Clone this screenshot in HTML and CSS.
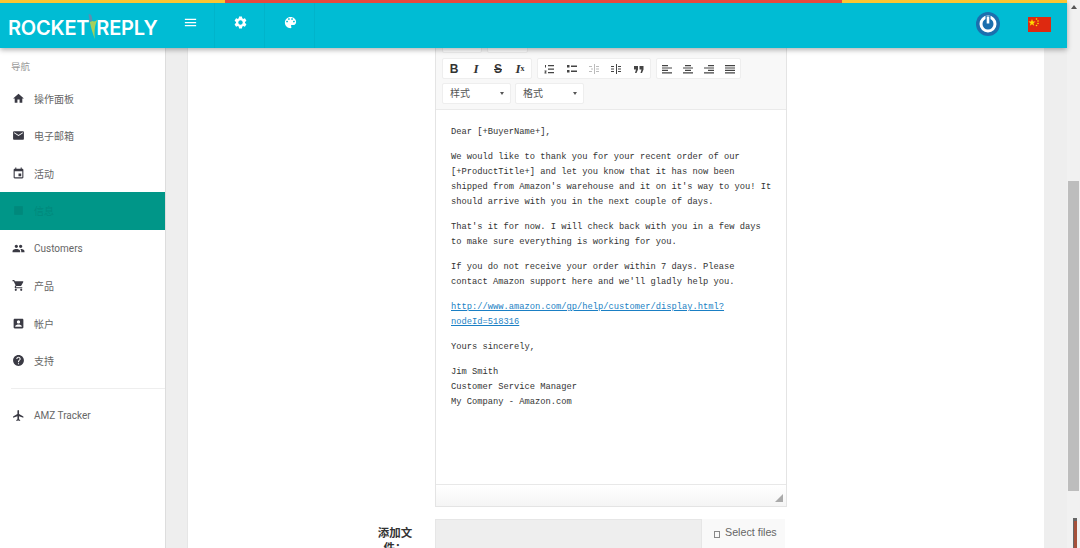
FILE: index.html
```html
<!DOCTYPE html>
<html lang="zh">
<head>
<meta charset="utf-8">
<title>RocketReply</title>
<link rel="stylesheet" href="styles.css">
</head>
<body>
<div class="page">
  <div class="viewport">
    <header class="header">
      <div class="strip"><i class="s-yellow s-a"></i><i class="s-red"></i><i class="s-yellow s-b"></i></div>
      <div class="bar">
        <div class="logo"><span>ROCKET</span><svg class="rocket" viewBox="0 0 10 25"><path d="M.5.500C1.800-.2 3 .3 3.500 1.800L4.500 7 1.800 8z" fill="#5b8fb0"/><path d="M1.800 8 4.500 7C6 8 7.500 7.500 9.500 5.500 7.500 10 6 14 6.800 25 4.500 19 3 13 1.800 8z" fill="#a7cf5a"/></svg><span>REPLY</span></div>
        <nav class="tools">
          <div class="tool"><svg class="ti" viewBox="0 0 24 24"><path d="M3 18h18v-2H3v2zm0-5h18v-2H3v2zm0-7v2h18V6H3z"/></svg></div>
          <div class="tool"><svg class="ti" viewBox="0 0 24 24"><path d="M19.140 12.940c.04-.3.06-.61.06-.94 0-.32-.02-.64-.07-.94l2.030-1.580c.18-.14.23-.41.12-.61l-1.920-3.320c-.12-.22-.37-.29-.59-.22l-2.390.96c-.5-.38-1.030-.7-1.620-.94l-.36-2.540c-.04-.24-.24-.41-.48-.41h-3.840c-.24 0-.43.17-.47.41l-.36 2.540c-.59.24-1.130.57-1.620.94l-2.390-.96c-.22-.08-.47 0-.59.22L2.740 8.870c-.12.21-.08.47.12.61l2.030 1.580c-.05.3-.09.63-.09.94s.02.64.07.94l-2.030 1.580c-.18.14-.23.41-.12.61l1.920 3.320c.12.22.37.29.59.22l2.390-.96c.5.38 1.030.7 1.620.94l.36 2.540c.05.24.24.41.48.41h3.840c.24 0 .44-.17.47-.41l.36-2.540c.59-.24 1.130-.56 1.620-.94l2.390.96c.22.08.47 0 .59-.22l1.920-3.320c.12-.22.07-.47-.12-.61l-2.010-1.580zM12 15.600c-1.980 0-3.600-1.620-3.600-3.600s1.620-3.600 3.600-3.600 3.600 1.620 3.600 3.600-1.620 3.600-3.600 3.600z"/></svg></div>
          <div class="tool"><svg class="ti" viewBox="0 0 24 24"><path d="M12 3c-4.970 0-9 4.030-9 9s4.030 9 9 9c.83 0 1.500-.67 1.500-1.500 0-.39-.15-.74-.39-1.010-.23-.26-.38-.61-.38-.99 0-.83.67-1.500 1.500-1.500H16c2.760 0 5-2.240 5-5 0-4.420-4.030-8-9-8zm-5.500 9c-.83 0-1.500-.67-1.500-1.500S5.670 9 6.500 9 8 9.670 8 10.500 7.330 12 6.500 12zm3-4C8.670 8 8 7.330 8 6.500S8.670 5 9.500 5s1.500.67 1.500 1.500S10.330 8 9.500 8zm5 0c-.83 0-1.500-.67-1.500-1.500S13.670 5 14.500 5s1.500.67 1.500 1.500S15.330 8 14.500 8zm3 4c-.83 0-1.500-.67-1.500-1.500S16.670 9 17.500 9s1.500.67 1.500 1.500-.67 1.500-1.500 1.500z"/></svg></div>
        </nav>
        <div class="right">
          <svg class="power" viewBox="0 0 24 24"><circle cx="12" cy="12" r="12" fill="#1b6fae"/><circle cx="12" cy="12" r="7" fill="none" stroke="#fff" stroke-width="3"/><path d="M12 4v8" stroke="#1b6fae" stroke-width="5"/><path d="M12 4.500v7" stroke="#fff" stroke-width="2.600"/></svg>
          <svg class="flag" viewBox="0 0 23 15"><rect width="23" height="15" fill="#de2910"/><path d="M4 2l.9 2.600 2.700 0-2.200 1.600.8 2.600L4 7.200 1.800 8.800l.8-2.600L.4 4.600l2.700 0z" fill="#ffde00"/><circle cx="8.500" cy="2" r=".8" fill="#ffde00"/><circle cx="10" cy="4" r=".8" fill="#ffde00"/><circle cx="10" cy="6.500" r=".8" fill="#ffde00"/><circle cx="8.500" cy="8.500" r=".8" fill="#ffde00"/></svg>
        </div>
      </div>
    </header>
    <div class="body">
      <aside class="sidebar">
        <div class="side-title">导航</div>
        <a class="item"><svg class="ic" viewBox="0 0 24 24"><path d="M10 20v-6h4v6h5v-8h3L12 3 2 12h3v8z"/></svg><span>操作面板</span></a>
        <a class="item"><svg class="ic" viewBox="0 0 24 24"><path d="M20 4H4c-1.100 0-1.990.9-1.990 2L2 18c0 1.100.9 2 2 2h16c1.100 0 2-.9 2-2V6c0-1.100-.9-2-2-2zm0 4l-8 5-8-5V6l8 5 8-5v2z"/></svg><span>电子邮箱</span></a>
        <a class="item"><svg class="ic" viewBox="0 0 24 24"><path d="M17 12h-5v5h5v-5zM16 1v2H8V1H6v2H5c-1.110 0-1.990.9-1.990 2L3 19c0 1.100.89 2 2 2h14c1.100 0 2-.9 2-2V5c0-1.100-.9-2-2-2h-1V1h-2zm3 18H5V8h14v11z"/></svg><span>活动</span></a>
        <a class="item active"><svg class="ic" viewBox="0 0 24 24"><path d="M20 4H4v16h16z"/></svg><span>信息</span></a>
        <a class="item"><svg class="ic" viewBox="0 0 24 24"><path d="M16 11c1.660 0 2.990-1.340 2.990-3S17.660 5 16 5c-1.660 0-3 1.340-3 3s1.340 3 3 3zm-8 0c1.660 0 2.990-1.340 2.990-3S9.660 5 8 5C6.340 5 5 6.340 5 8s1.340 3 3 3zm0 2c-2.330 0-7 1.170-7 3.500V19h14v-2.500c0-2.330-4.670-3.500-7-3.500zm8 0c-.29 0-.62.02-.97.05 1.160.84 1.970 1.970 1.970 3.450V19h6v-2.500c0-2.330-4.670-3.500-7-3.500z"/></svg><span>Customers</span></a>
        <a class="item"><svg class="ic" viewBox="0 0 24 24"><path d="M7 18c-1.100 0-1.990.9-1.990 2S5.900 22 7 22s2-.9 2-2-.9-2-2-2zM1 2v2h2l3.600 7.590-1.350 2.450c-.16.28-.25.61-.25.96 0 1.100.9 2 2 2h12v-2H7.420c-.14 0-.25-.11-.25-.25l.03-.12.9-1.630h7.450c.75 0 1.410-.41 1.750-1.030l3.580-6.490c.08-.14.12-.31.12-.48 0-.55-.45-1-1-1H5.210l-.94-2H1zm16 16c-1.100 0-1.990.9-1.990 2s.89 2 1.990 2 2-.9 2-2-.9-2-2-2z"/></svg><span>产品</span></a>
        <a class="item"><svg class="ic" viewBox="0 0 24 24"><path d="M3 5v14c0 1.100.89 2 2 2h14c1.100 0 2-.9 2-2V5c0-1.100-.9-2-2-2H5c-1.110 0-2 .9-2 2zm12 4c0 1.660-1.340 3-3 3s-3-1.340-3-3 1.340-3 3-3 3 1.340 3 3zm-9 8c0-2 4-3.100 6-3.100s6 1.100 6 3.100v1H6v-1z"/></svg><span>帐户</span></a>
        <a class="item"><svg class="ic" viewBox="0 0 24 24"><path d="M12 2C6.480 2 2 6.480 2 12s4.480 10 10 10 10-4.480 10-10S17.520 2 12 2zm1 17h-2v-2h2v2zm2.070-7.750l-.9.92C13.450 12.900 13 13.500 13 15h-2v-.5c0-1.100.45-2.100 1.170-2.830l1.240-1.260c.37-.36.59-.86.59-1.410 0-1.100-.9-2-2-2s-2 .9-2 2H8c0-2.210 1.790-4 4-4s4 1.790 4 4c0 .88-.36 1.680-.93 2.250z"/></svg><span>支持</span></a>
        <div class="side-rule"></div>
        <a class="item"><svg class="ic" viewBox="0 0 24 24"><path d="M21 16v-2l-8-5V3.500c0-.83-.67-1.500-1.500-1.500S10 2.670 10 3.500V9l-8 5v2l8-2.500V19l-2 1.500V22l3.500-1 3.500 1v-1.500L13 19v-5.500l8 2.500z"/></svg><span>AMZ Tracker</span></a>
      </aside>
      <main class="gutter">
        <section class="content">
          <div class="form-row">
            <div class="label-col"></div>
            <div class="editor">
              <div class="toolbar">
                <div class="tb-row">
                  <div class="group g-a"><svg class="bi" viewBox="0 0 10 10"><path d="M1 7h8v2H1z"/></svg><svg class="bi faint" viewBox="0 0 10 10"><path d="M1 7h8v2H1z"/></svg></div>
                  <div class="group g-b"><svg class="bi" viewBox="0 0 10 10"><path d="M1 7h3v2H1zM6 7h3v2H6z"/></svg></div>
                </div>
                <div class="tb-row">
                  <div class="group g-1">
                    <span class="btn t-b">B</span><span class="btn t-i">I</span><span class="btn t-s">S</span><span class="btn t-i">I<sub class="x">x</sub></span>
                  </div>
                  <div class="group g-2">
                    <span class="btn"><svg class="bi" viewBox="0 0 10 10"><path d="M4 1h6v1.200H4zM4 4.500h6v1.200H4zM4 8h6v1.200H4zM1 1h1v2.500H1zM.5 6.500h2v1l-1 1h1V9.500h-2v-1l1-1h-1z"/></svg></span>
                    <span class="btn"><svg class="bi" viewBox="0 0 10 10"><path d="M4 1.500h6v1.500H4zM4 6.500h6V8H4zM0 1h2.500v2.500H0zM0 6h2.500v2.500H0z"/></svg></span>
                    <span class="btn"><svg class="bi faint" viewBox="0 0 10 10"><path d="M5 0h1v10H5zM7 2h3v1H7zM7 4.500h3v1H7zM7 7h3v1H7zM0 2h3v1H0zM0 7h3v1H0zM2 4.500h2v1H2z"/></svg></span>
                    <span class="btn"><svg class="bi" viewBox="0 0 10 10"><path d="M5 0h1v10H5zM7 2h3v1H7zM7 4.500h3v1H7zM7 7h3v1H7zM0 2h3v1H0zM0 7h3v1H0zM0 4.500h3v1H0z"/></svg></span>
                    <span class="btn"><svg class="bi" viewBox="0 0 10 10"><path d="M0 2h4v3.500L2.500 9H1l1-3.500H0zM5.500 2h4v3.500L8 9H6.500l1-3.500h-2z"/></svg></span>
                  </div>
                  <div class="group g-3">
                    <span class="btn"><svg class="bi" viewBox="0 0 10 10"><path d="M0 1h6v1.200H0zM0 3.400h10v1.200H0zM0 5.800h6V7H0zM0 8.200h10v1.200H0z"/></svg></span>
                    <span class="btn"><svg class="bi" viewBox="0 0 10 10"><path d="M2 1h6v1.200H2zM0 3.400h10v1.200H0zM2 5.800h6V7H2zM0 8.200h10v1.200H0z"/></svg></span>
                    <span class="btn"><svg class="bi" viewBox="0 0 10 10"><path d="M4 1h6v1.200H4zM0 3.400h10v1.200H0zM4 5.800h6V7H4zM0 8.200h10v1.200H0z"/></svg></span>
                    <span class="btn"><svg class="bi" viewBox="0 0 10 10"><path d="M0 1h10v1.200H0zM0 3.400h10v1.200H0zM0 5.800h10V7H0zM0 8.200h10v1.200H0z"/></svg></span>
                  </div>
                </div>
                <div class="tb-row">
                  <div class="combo"><span>样式</span><i class="caret"></i></div>
                  <div class="combo"><span>格式</span><i class="caret"></i></div>
                </div>
              </div>
              <div class="editable">
                <p>Dear [+BuyerName+],</p>
                <p>We would like to thank you for your recent order of our [+ProductTitle+] and let you know that it has now been shipped from Amazon's warehouse and it on it's way to you! It should arrive with you in the next couple of days.</p>
                <p>That's it for now. I will check back with you in a few days to make sure everything is working for you.</p>
                <p>If you do not receive your order within 7 days. Please contact Amazon support here and we'll gladly help you.</p>
                <p><a class="link">http://www.amazon.com/gp/help/customer/display.html?nodeId=518316</a></p>
                <p>Yours sincerely,</p>
                <p>Jim Smith<br>Customer Service Manager<br>My Company - Amazon.com</p>
              </div>
              <div class="editor-foot"><svg class="grip" viewBox="0 0 8 8"><path d="M8 0v8H0z"/></svg></div>
            </div>
          </div>
          <div class="form-row file-row">
            <div class="label-col"><label class="file-label">添加文件：</label></div>
            <div class="file-input"></div>
            <div class="file-btn"><i class="box"></i>Select files</div>
          </div>
        </section>
      </main>
    </div>
  </div>
  <div class="scrollbar">
    <i class="arrow"></i>
    <div class="thumb"></div>
    <div class="mark"></div>
  </div>
</div>
</body>
</html>
```
FILE: styles.css
```css
* { box-sizing: border-box; }
html, body { margin: 0; height: 100%; overflow: hidden; }
body { font-family: Roboto, "Noto Sans CJK SC", sans-serif; background: #fff; }
.page { display: flex; width: 1080px; height: 548px; }
.viewport { width: 1067px; display: flex; flex-direction: column; }

.header { height: 48px; position: relative; z-index: 2; background: #00bcd4; box-shadow: 0 2px 5px rgba(0,0,0,.3); flex: none; }
.strip { display: flex; height: 3px; }
.strip i { display: block; }
.s-yellow { background: #fbc532; }
.s-a { width: 225px; }
.s-red { width: 617px; background: #e5493f; }
.s-b { flex: 1; }
.bar { display: flex; height: 45px; align-items: flex-start; }
.logo { width: 165px; height: 45px; padding: 0 0 0 8px; display: flex; align-items: center; color: #fff; font: 600 20px/1 Inter, sans-serif; letter-spacing: -.2px; }
.logo span { margin-top: 4px; }
.rocket { width: 10px; height: 25px; flex: none; margin: 1px -2px 0 -1px; }
.tools { display: flex; }
.tool { width: 50px; height: 45px; padding: 12px 0 0 18px; border-right: 1px solid rgba(0,0,0,.04); }
.ti { display: block; width: 15px; height: 15px; fill: #fff; }
.right { margin-left: auto; display: flex; align-items: center; height: 42px; padding-right: 16px; gap: 28px; }
.power { width: 24px; height: 24px; display: block; }
.flag { width: 23px; height: 15px; display: block; }

.body { flex: 1; display: flex; overflow: hidden; }
.sidebar { width: 166px; flex: none; background: #fff; border-right: 1px solid #ddd; padding-top: 11px; }
.side-title { height: 20.500px; padding: 1px 0 0 11px; font-size: 9.500px; line-height: 14px; color: #999; }
.item { display: flex; align-items: center; height: 37.500px; padding-left: 12px; color: #666; font-size: 10px; }
.item span { margin-left: 9px; }
.ic { width: 13px; height: 13px; flex: none; fill: #3a3a44; }
.active { background: #009688; color: #00897c; }
.active .ic { fill: #00897c; }
.side-rule { height: 1px; background: #eee; margin: 8px 0 8.500px 11px; }

.gutter { flex: 1; background: #eee; padding: 0 23px 0 21px; min-width: 0; }
.content { background: #fff; height: 100%; border-left: 1px solid #e6e6e6; }
.form-row { display: flex; }
.label-col { width: 247px; flex: none; display: flex; justify-content: flex-end; }
.editor { width: 352px; margin-top: -16px; border: 1px solid #e4e4e4; border-top: 0; background: #fff; }
.toolbar { background: #f8f8f8; border-bottom: 1px solid #eaeaea; padding: 0 6px 5px; height: 78px; }
.tb-row { display: flex; gap: 5px; margin-bottom: 4px; height: 21px; }
.group { display: flex; background: #fff; border: 1px solid #eee; border-radius: 2px; align-items: center; }
.g-a { width: 40px; justify-content: space-around; }
.g-b { width: 41px; justify-content: center; }
.tb-row:first-child { margin-bottom: 5px; }
.tb-row:first-child .group { padding-left: 8px; }
.g-1 { width: 90px; }
.g-1 .btn { width: 22px; }
.g-2 { width: 114px; }
.g-2 .btn { width: 22.500px; }
.g-3 { width: 85px; }
.g-3 .btn { width: 21px; }
.btn { display: flex; align-items: center; justify-content: center; height: 19px; color: #333; font: 11px/1 "Liberation Serif", serif; }
.bi { display: block; width: 10px; height: 10px; fill: #444; }
.faint { fill: #bbb; }
.t-b { font: 700 12px/1 "Liberation Sans", sans-serif; }
.t-i { font: italic 700 13px/1 "Liberation Serif", serif; }
.t-s { font: 700 12px/1 "Liberation Sans", sans-serif; text-decoration: line-through; }
.x { font-size: 8px; line-height: 0; font-style: normal; }
.combo { width: 69px; height: 20.500px; display: flex; align-items: center; justify-content: space-between; background: #fff; border: 1px solid #eee; border-radius: 2px; padding: 0 6px 0 7px; font: 10px/1 "Noto Sans CJK SC", sans-serif; color: #555; }
.combo + .combo { margin-left: -1px; }
.caret { width: 0; height: 0; border: 2.500px solid transparent; border-top: 3px solid #555; border-bottom: 0; }

.editable { height: 374px; padding: 15px 12px 0 15px; font: 8.750px/15px "Liberation Mono", monospace; color: #333; overflow: hidden; }
.editable p { margin: 0 0 10px; }
.link { color: #1a7fc4; text-decoration: underline; }
.editor-foot { height: 22px; background: linear-gradient(#fff, #f5f5f5); border-top: 1px solid #e8e8e8; display: flex; justify-content: flex-end; align-items: flex-end; padding: 0 3px 4px 0; }
.grip { display: block; width: 8px; height: 8px; fill: #aaa; }

.file-row { margin-top: 12px; }
.file-label { width: 36px; margin-right: 22px; font: 700 11.500px/15px "Noto Sans CJK SC", sans-serif; color: #333; text-align: center; padding-top: 6px; }
.file-input { width: 267px; height: 30px; background: #eee; border: 1px solid #e6e6e6; flex: none; }
.file-btn { width: 83px; height: 30px; background: #f9f9f9; display: flex; align-items: center; padding: 0 0 3px 12px; font: 10.700px/1 "Liberation Sans", sans-serif; color: #666; }
.box { width: 6px; height: 7px; border: 1px solid #888; margin: 3px 5px 0 0; flex: none; }

.scrollbar { width: 13px; flex: none; background: #f1f1f1; display: flex; flex-direction: column; align-items: center; position: relative; }
.arrow { width: 0; height: 0; margin-top: 5px; border: 3.500px solid transparent; border-bottom: 4px solid #555; border-top: 0; }
.thumb { width: 11px; height: 310px; margin: 172px 0 0 0; background: #bdbdbd; }
.mark { position: absolute; left: 6px; top: 518px; width: 4px; height: 30px; background: linear-gradient(#666 0 3px, #a5503a 3px); border-left: 1px solid #666; }
```
